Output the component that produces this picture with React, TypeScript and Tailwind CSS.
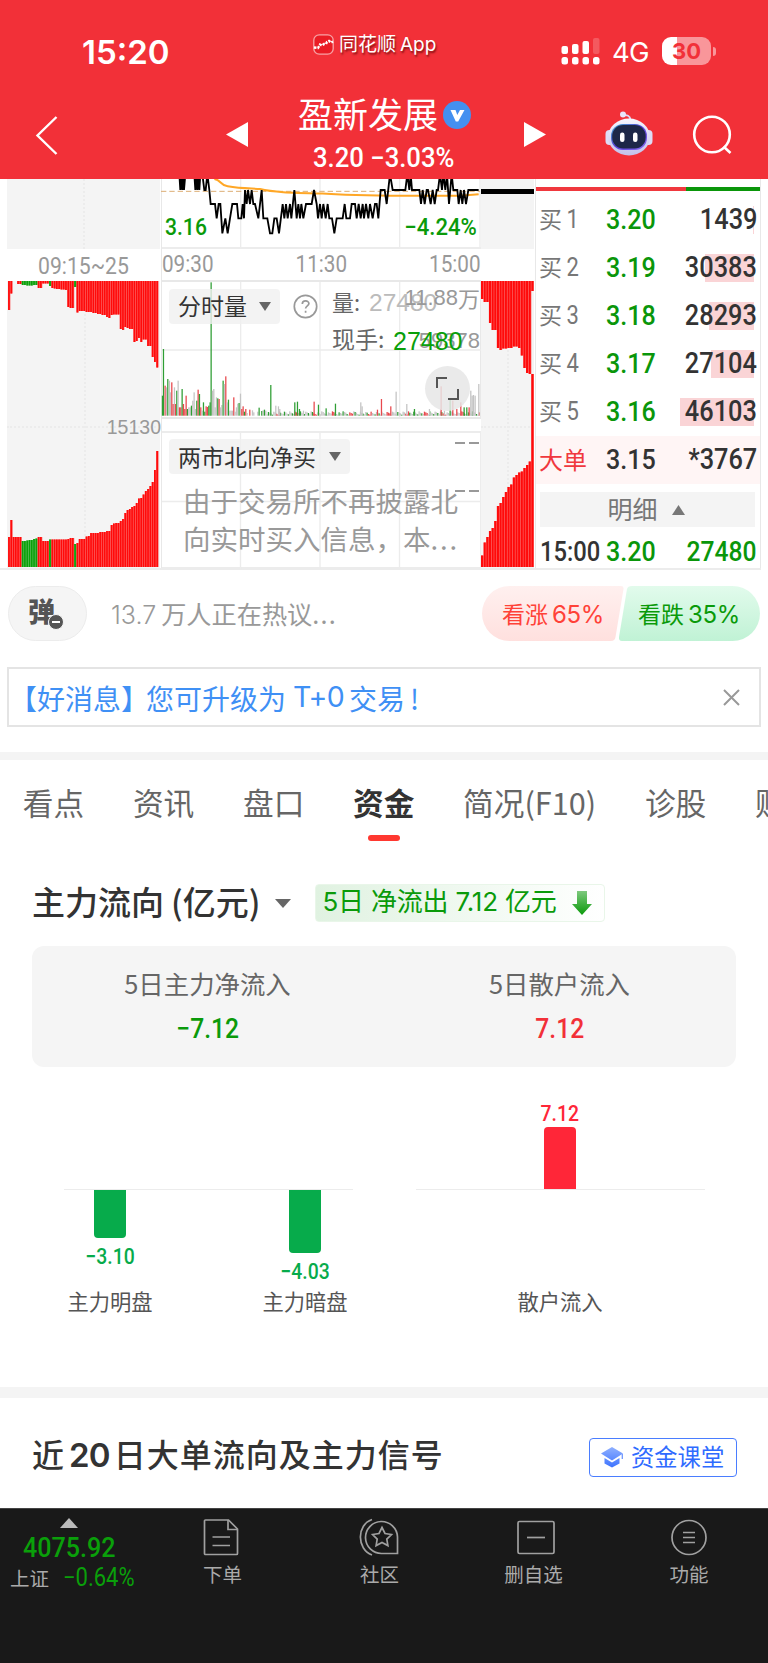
import React from 'react';
import clsx from 'clsx';

// condensed figures used for every price and volume
const NUM = "inline-block whitespace-nowrap font-['Roboto','Noto_Sans_CJK_SC',sans-serif] scale-x-88";

type Tone = 'g' | 'r' | 'n';

const TONES: Record<Tone, string> = { g: '#2f9e34', r: '#e8484d', n: '#c4c4c4' };

// call auction bars, [upper height, lower height, green?]
const AUCTION_OPEN: [number, number, boolean?][] = [
  [29, 30], [12.5, 47], [0, 30], [0, 30], [3, 30], [3, 30],
  [4, 26, true], [4, 26, true], [4.5, 26.5, true], [4.5, 27, true], [4.5, 27, true], [4, 28, true], [4, 28.5, true],
  [7, 30], [7, 30], [2.5, 26], [2.5, 26], [2.5, 26], [5, 27.5, true],
  [7, 27.5], [7.5, 27.5], [8, 27.5], [8, 27.5], [8.5, 27.5], [8.5, 27.5], [9, 27.5],
  [26, 28], [27, 29], [27, 29], [6, 23, true], [31.5, 24], [30, 28], [30, 28], [30, 28],
  [31, 30.5], [31, 31], [31, 34], [32, 34], [32, 34], [33, 34], [33, 35], [34, 35], [34, 35],
  [36, 36], [37, 36], [34, 42], [33.5, 43.5], [33.5, 44], [33.5, 44], [48, 46], [49, 48],
  [46, 54], [47, 57], [48, 58], [48, 60], [61, 61], [60, 64], [57, 68.5], [61, 69],
  [58.5, 72.5], [58.5, 76], [65, 78], [65, 81], [76, 85], [81, 97], [86.5, 116],
];

const AUCTION_CLOSE: [number, number, boolean?][] = [
  [18, 11.5], [21, 24.5], [21, 30], [42, 36], [49, 39], [49, 46], [67, 61], [69, 64], [67.5, 70], [67.5, 75],
  [67, 80], [67, 82.5], [65.5, 89.5], [65.5, 92], [67, 94.5], [74.5, 95.5], [87, 99], [92, 102], [93, 105.5], [10, 193],
];

const VOLUME: [number, number, Tone][] = [
  [4, 60, 'g'], [7, 200, 'g'], [12, 90, 'r'], [16, 85, 'n'], [20, 110, 'g'], [25, 105, 'n'], [28, 70, 'n'],
  [32, 100, 'r'], [36, 35, 'r'], [40, 85, 'n'], [43, 35, 'r'], [47, 75, 'g'], [51, 105, 'n'], [55, 25, 'r'],
  [59, 25, 'r'], [63, 80, 'g'], [67, 35, 'r'], [71, 20, 'r'], [75, 60, 'r'], [79, 20, 'g'], [83, 25, 'n'],
  [87, 25, 'n'], [91, 30, 'g'], [95, 45, 'n'], [99, 70, 'n'], [103, 20, 'n'], [107, 45, 'g'], [111, 78, 'r'],
  [115, 65, 'g'], [119, 25, 'r'], [123, 15, 'n'], [127, 40, 'g'], [131, 12, 'g'], [135, 28, 'r'], [139, 26, 'r'],
  [143, 30, 'g'], [147, 40, 'g'], [150, 400, 'g'], [154, 75, 'n'], [158, 80, 'n'], [162, 25, 'n'], [166, 55, 'n'],
  [170, 52, 'g'], [174, 50, 'r'], [178, 25, 'n'], [182, 32, 'n'], [186, 105, 'g'], [190, 95, 'n'], [194, 118, 'r'],
  [198, 40, 'n'], [202, 48, 'g'], [206, 15, 'n'], [210, 15, 'n'], [214, 15, 'n'], [218, 55, 'r'], [222, 12, 'n'],
  [226, 25, 'n'], [230, 36, 'n'], [234, 38, 'g'], [238, 66, 'n'], [242, 20, 'r'], [246, 28, 'r'], [250, 12, 'g'],
  [254, 20, 'r'], [258, 8, 'n'], [266, 18, 'r'], [274, 16, 'n'], [278, 10, 'n'], [290, 12, 'n'], [294, 24, 'g'],
  [302, 14, 'g'], [306, 16, 'n'], [310, 18, 'g'], [314, 15, 'n'], [329, 92, 'g'], [344, 30, 'n'],
  [352, 28, 'n'], [356, 20, 'n'], [401, 40, 'g'], [409, 42, 'g'], [415, 20, 'g'], [427, 15, 'n'], [459, 42, 'r'],
  [472, 33, 'g'], [495, 22, 'g'], [523, 36, 'g'], [599, 40, 'n'], [603, 28, 'n'], [649, 18, 'r'], [661, 50, 'r'],
  [689, 28, 'r'], [705, 72, 'n'], [737, 35, 'n'], [760, 20, 'g'], [805, 20, 'n'], [840, 88, 'r'], [850, 15, 'n'],
  [867, 50, 'g'], [875, 45, 'r'], [887, 20, 'r'], [899, 40, 'r'], [909, 25, 'g'], [917, 25, 'g'], [924, 25, 'r'],
  [929, 75, 'n'], [933, 60, 'n'], [937, 62, 'n'], [942, 60, 'n'], [953, 95, 'n'],
];

const PRICE_LINE =
  '55,-15 58,33 61,-15 64,33 67,-15 69,33 73,-15 100,-15 103,33 106,-15 109,33 112,-15 115,33 118,-15 124,-15 130,33 134,33 139,-15 145,33 149,75 162,75 167,118 173,75 178,75 184,163 193,118 200,163 207,118 214,75 228,75 232,118 241,118 245,75 249,118 252,33 257,75 261,33 267,75 272,33 277,75 282,75 292,118 302,33 ' +
  '307,118 319,118 327,163 334,163 340,118 347,118 354,163 365,75 370,118 375,75 380,118 387,75 391,118 400,33 407,118 412,75 417,118 421,75 427,118 435,75 452,75 459,33 467,75 471,118 477,75 482,118 487,75 494,118 500,75 505,118 513,118 520,163 527,118 545,118 551,75 556,118 567,118 572,75 582,75 587,118 593,75 599,118 605,75 609,118 615,75 622,118 627,75 635,118 642,75 647,75 652,118 659,33 671,33 677,75 687,-15 695,33 733,33 739,-15 745,33 749,-15 753,33 775,33 780,75 785,33 791,75 797,33 801,33 809,75 815,33 821,75 827,33 831,33 837,-15 843,33 847,-15 853,33 858,-15 864,75 872,-15 877,33 889,33 893,75 899,33 904,75 909,33 915,75 922,33 953,33';

const BIDS = [
  { label: '1', price: '3.20', volume: '1439', bar: 1 },
  { label: '2', price: '3.19', volume: '30383', bar: 49 },
  { label: '3', price: '3.18', volume: '28293', bar: 45 },
  { label: '4', price: '3.17', volume: '27104', bar: 43 },
  { label: '5', price: '3.16', volume: '46103', bar: 74 },
];

function Triangle({ className, points, w, h }: { className?: string; points: string; w: number; h: number }) {
  return (
    <svg className={clsx('shrink-0', className)} width={w} height={h} viewBox={`0 0 ${w} ${h}`} fill="currentColor">
      <polygon points={points} />
    </svg>
  );
}

function Header() {
  return (
    <header className="h-[179px] shrink-0 bg-[#f23038] text-white">
      <div className="flex h-[96px] items-start">
        <div className="ml-[82px] mt-[35px] w-[231px] font-['Inter'] text-[33px] font-semibold leading-[34px]">15:20</div>
        <div className="mt-[31px] flex w-[248px] items-center">
          <svg width="21" height="21" viewBox="0 0 21 21" fill="none">
            <rect x="0.8" y="0.8" width="19.4" height="19.4" rx="5.5" fill="#ea1c25" stroke="#f7a3a6" strokeWidth="1.3" />
            <path d="M1 13.5l4 .5 2-3.5 2 1 2-1.5 2 0 1-2 2-1 2 1.500 2-1" stroke="#fff" strokeWidth="2.400" strokeDasharray="2.500 1.2" />
          </svg>
          <span className="ml-[5px] font-['Noto_Sans_CJK_SC'] text-[19px] leading-[24px] [text-shadow:1px_2px_2px_rgba(80,0,0,0.7)]">
            同花顺<span className="ml-[4px] font-['Inter'] text-[19px]">App</span>
          </span>
        </div>
        <svg className="mt-[37px]" width="40" height="29" viewBox="0 0 40 29" fill="#fff">
          <rect x="0.500" y="9" width="6.500" height="8" rx="2" />
          <rect x="11" y="7" width="6.500" height="10" rx="2" />
          <rect x="21.500" y="4" width="6.500" height="13" rx="2" />
          <rect x="32" y="1" width="6.500" height="16" rx="2" opacity="0.2" />
          <rect x="0.500" y="20" width="6.500" height="7.500" rx="2.500" />
          <rect x="11" y="20" width="6.500" height="7.500" rx="2.500" />
          <rect x="21.500" y="20" width="6.500" height="7.500" rx="2.500" />
          <rect x="32" y="20" width="6.500" height="7.500" rx="2.500" />
        </svg>
        <div className="ml-[11px] mt-[38px] w-[50px] font-['Inter'] text-[27.500px] leading-[28px] tracking-tight">4G</div>
        <div className="mt-[37px] flex items-center">
          <div className="flex h-[28px] w-[49px] items-center justify-center rounded-[9px] bg-[linear-gradient(to_right,#fff_31%,#f9969a_31%)] font-['Inter'] text-[22px] font-bold leading-none text-[#f23038]">
            30
          </div>
          <div className="ml-[2px] h-[9px] w-[3px] rounded-r-full bg-[#f9969a]" />
        </div>
      </div>

      <div className="flex h-[83px] items-start">
        <svg className="ml-[35px] mt-[19px]" width="24" height="42" viewBox="0 0 24 42" fill="none" stroke="#fff" strokeWidth="2.4">
          <path d="M21.500 2L2.500 20.500l19 18.500" />
        </svg>
        <Triangle className="ml-[167px] mt-[26px]" w={22} h={25} points="0,12.500 22,0 22,25" />
        <div className="ml-[50px] w-[173px]">
          <div className="flex h-[37px] items-center">
            <span className="whitespace-nowrap pb-[3px] font-['Noto_Sans_CJK_SC'] text-[35px] leading-[34px]">盈新发展</span>
            <svg className="ml-[5px]" width="28" height="28" viewBox="0 0 28 28">
              <circle cx="14" cy="14" r="14" fill="#4490f0" />
              <path d="M7.500 9h5l1.800 5L17 9h4.500l-6.300 11.500h-2.400z" fill="#fff" />
            </svg>
          </div>
          <div className="mt-[9px] pl-[15px]">
            <span className="inline-block origin-left scale-x-95 whitespace-nowrap font-['Roboto'] text-[27px] font-medium leading-[32px]">3.20 −3.03%</span>
          </div>
        </div>
        <Triangle className="ml-[53px] mt-[26px]" w={22} h={25} points="0,0 22,12.500 0,25" />
        <svg className="ml-[59px] mt-[15px]" width="48" height="45" viewBox="0 0 48 45" fill="none">
          <defs>
            <linearGradient id="shell" x1="0" y1="0" x2="0" y2="1">
              <stop offset="0" stopColor="#f6f6ff" />
              <stop offset="1" stopColor="#c3c0ea" />
            </linearGradient>
            <linearGradient id="visor" x1="0" y1="0" x2="1" y2="1">
              <stop offset="0" stopColor="#3fa9c9" />
              <stop offset="0.5" stopColor="#5a42d8" />
              <stop offset="1" stopColor="#8a6cf0" />
            </linearGradient>
          </defs>
          <path d="M18 4.500c4-1 7 .5 7.500 4" stroke="#ddd8f5" strokeWidth="1.800" />
          <circle cx="18" cy="3.500" r="3" fill="#e9e4fa" />
          <rect x="0.500" y="19" width="9" height="15" rx="4" fill="#dedcf6" />
          <rect x="38.500" y="19" width="9" height="15" rx="4" fill="#dedcf6" />
          <ellipse cx="24" cy="26" rx="21" ry="18.500" fill="url(#shell)" />
          <rect x="6" y="13" width="36" height="26" rx="12" fill="url(#visor)" />
          <rect x="7.200" y="14" width="33.500" height="23.500" rx="11" fill="#1d2748" />
          <rect x="15" y="21.500" width="4.500" height="9.500" rx="2.200" fill="#fff" />
          <rect x="28" y="21.500" width="4.500" height="9.500" rx="2.200" fill="#fff" />
        </svg>
        <svg className="ml-[39px] mt-[18px]" width="42" height="42" viewBox="0 0 42 42" fill="none" stroke="#fff" strokeWidth="2.600">
          <circle cx="20" cy="20.500" r="17.800" />
          <path d="M31.500 32.500l7 6.500" />
        </svg>
      </div>
    </header>
  );
}

function AuctionChart({ bars, width, pitch, offset }: { bars: [number, number, boolean?][]; width: number; pitch: number; offset: number }) {
  return (
    <svg width={width} height="286" viewBox={`0 0 ${width} 286`}>
      {bars.map(([up, down, green], i) => {
        const x = offset + i * pitch;
        const fill = green ? '#0aa00a' : '#ff0a0a';
        return (
          <g key={i} fill={fill}>
            <rect x={x} y="0" width={pitch} height={up} opacity="0.6" />
            <rect x={x} y="0" width={pitch - 0.600} height={up} />
            <rect x={x} y={286 - down} width={pitch} height={down} opacity="0.6" />
            <rect x={x} y={286 - down} width={pitch - 0.600} height={down} />
          </g>
        );
      })}
    </svg>
  );
}

function VolumeChart() {
  // low trading between the peaks
  const rest = Array.from({ length: 160 }, (_, i) => {
    const seed = (i * 7919 + 131) % 97;
    const tone: Tone = seed % 5 === 0 ? 'r' : seed % 4 === 0 ? 'g' : 'n';
    return [318 + i * 4, 3 + (seed % 11), tone] as [number, number, Tone];
  });
  return (
    <svg className="absolute -left-px top-0" width="320" height="135" viewBox="0 0 960 405">
      <path d="M0 204H960M239 0V405M477 0V405M716 0V405" stroke="#ececec" strokeWidth="4" />
      {[...rest, ...VOLUME].map(([x, h, tone], i) => (
        <rect key={i} x={x - 1.500} y={401 - h} width="3.800" height={h} fill={TONES[tone]} />
      ))}
    </svg>
  );
}

function QuoteChart() {
  return (
    <div className="flex w-[535px] shrink-0">
      <div className="ml-[7px] w-[154px]">
        <div className="flex h-[70px] w-[153px] justify-center bg-[#f4f4f4]">
          <div className="w-0 border-l-2 border-dotted border-[#ececec]" />
        </div>
        <div className="h-[32px] pl-[31px] text-[23.500px] leading-[32px] text-[#999]">
          <span className="inline-block origin-left scale-x-90 font-['Roboto']">09:15~25</span>
        </div>
        <div className="relative h-[287px] w-[153px] bg-[#f4f4f4]">
          <div className="absolute left-[77px] top-0 h-full border-l-2 border-dotted border-[#ececec]" />
          <div className="absolute left-0 top-[145px] w-full border-t-2 border-dotted border-[#ececec]" />
          <div className="relative">
            <AuctionChart bars={AUCTION_OPEN} width={153} pitch={2.28} offset={1.1} />
          </div>
          <div className="absolute -right-px top-[136px] font-['Liberation_Sans'] text-[19.500px] leading-[20px] text-[#999]">15130</div>
        </div>
      </div>

      <div className="w-[320px] border-l border-[#e8e8e8]">
        <div className="relative h-[70px] border-b-2 border-[#ececec]">
          <svg className="absolute -left-px top-0" width="320" height="69" viewBox="0 0 960 207" fill="none">
            <path d="M239 0V207M477 0V207M716 0V207M957 0V207" stroke="#ececec" strokeWidth="4" />
            <path d="M0 37H957" stroke="#dcae74" strokeWidth="3" strokeDasharray="16 9" />
            <path d="M160 0c20 2 18 20 40 22c40 7 70 6 97 8c40 10 90 11 200 14c150 9 250 6 400 6l56-4" stroke="#ffa726" strokeWidth="6" />
            <polyline points={PRICE_LINE} stroke="#000" strokeWidth="5.500" />
          </svg>
          <div className="relative flex justify-between pl-[3px] pr-[4px] pt-[33px] text-[24px] font-medium leading-[30px] text-[#0a9a0a]">
            <span className={clsx(NUM, 'origin-left')}>3.16</span>
            <span className="inline-block origin-right scale-x-92 whitespace-nowrap font-['Roboto']">−4.24%</span>
          </div>
        </div>
        <div className="flex h-[31px] justify-between text-[23.500px] leading-[31px] text-[#999]">
          <span className={clsx(NUM, 'origin-left')}>09:30</span>
          <span className={NUM}>11:30</span>
          <span className={clsx(NUM, 'origin-right')}>15:00</span>
        </div>
        <div className="relative h-[139px] border-y-2 border-r border-[#e8e8e8]">
          <VolumeChart />
          <div className="absolute left-[7px] top-[7px] flex h-[35px] w-[111px] items-center rounded-[4px] bg-[#f0f0f0]/80 pl-[9px] font-['Noto_Sans_CJK_SC'] text-[23px] leading-[33px] text-[#333]">
            <span className="pb-[2px]">分时量</span>
            <Triangle className="ml-[12px] text-[#666]" w={12} h={9} points="0,0 12,0 6,9" />
          </div>
          <svg className="absolute left-[131px] top-[12px]" width="25" height="25" viewBox="0 0 25 25" fill="none" stroke="#999" strokeWidth="1.700">
            <circle cx="12.500" cy="12.500" r="11.200" />
            <path d="M9.300 10c0-4 6.600-4 6.600-.4c0 2.300-3.300 2.400-3.300 5M12.600 16.800v2" />
          </svg>
          <div className="absolute left-[170px] top-[6px] font-['Noto_Sans_CJK_SC'] text-[22px] leading-[27px] text-[#666]">量:</div>
          <div className="absolute left-[207px] top-[7px] font-['Liberation_Sans'] text-[24.500px] leading-[28px] text-[#bbb]">27480</div>
          <div className="absolute right-0 -top-px flex items-center text-[#999]">
            <span className="font-['Liberation_Sans'] text-[22px]">11.88</span>
            <span className="font-['Noto_Sans_CJK_SC'] text-[22px]">万</span>
          </div>
          <div className="absolute left-[170px] top-[43px] font-['Noto_Sans_CJK_SC'] text-[23px] leading-[27px] text-[#666]">现手:</div>
          <div className="absolute right-0 top-[45px] font-['Liberation_Sans'] text-[22px] leading-[28px] text-[#999]">59378</div>
          <div className="absolute left-[231px] top-[45px] font-['Liberation_Sans'] text-[25px] leading-[28px] text-[#0a9f0a]">27480</div>
          <div className="absolute left-[263px] top-[84px] flex h-[45px] w-[45px] items-center justify-center rounded-full bg-[#e6e6e6]/85">
            <svg width="23" height="23" viewBox="0 0 23 23" fill="none" stroke="#555" strokeWidth="2">
              <path d="M1 11V1h10M12 22h10V12" />
            </svg>
          </div>
        </div>
        <div className="relative mt-[12px] h-[138px] border-y-2 border-r border-[#ececec]">
          <svg className="absolute left-0 top-0" width="320" height="136" viewBox="0 0 320 136">
            <path d="M0 68.500H320M78.500 0V136M158 0V136M237.500 0V136" stroke="#ececec" strokeWidth="1.300" />
            <path d="M293 10h10M307 10h10M293 58h10M307 58h10" stroke="#999" strokeWidth="2" />
          </svg>
          <div className="relative ml-[7px] mt-[6px] flex h-[35px] w-[181px] items-center rounded-[4px] bg-[#f0f0f0]/80 pl-[9px] font-['Noto_Sans_CJK_SC'] text-[23px] leading-[33px] text-[#333]">
            <span className="pb-px">两市北向净买</span>
            <Triangle className="ml-[13px] text-[#666]" w={12} h={9} points="0,0 12,0 6,9" />
          </div>
          <div className="relative ml-[21px] mt-[7px] whitespace-nowrap font-['Noto_Sans_CJK_SC'] text-[27.500px] leading-[38px] text-[#999]">
            <p>由于交易所不再披露北</p>
            <p>向实时买入信息，本<span className="tracking-[1.800px]">...</span></p>
          </div>
        </div>
      </div>

      <div className="w-[54px]">
        <div className="h-[70px] w-[53px] bg-[#f4f4f4] pt-[10px]">
          <div className="h-[5px] bg-black" />
        </div>
        <div className="h-[32px]" />
        <div className="relative h-[287px] w-[53px] bg-[#f4f4f4]">
          <div className="absolute left-[26px] top-0 h-full border-l-2 border-dotted border-[#ececec]" />
          <div className="absolute left-0 top-[145px] w-full border-t-2 border-dotted border-[#ececec]" />
          <div className="relative">
            <AuctionChart bars={AUCTION_CLOSE} width={53} pitch={2.65} offset={0} />
          </div>
        </div>
      </div>
    </div>
  );
}

function OrderBook() {
  return (
    <div className="w-[226px] border-x border-[#e8e8e8]">
      <div className="mt-[8px] flex h-[4px]">
        <div className="w-[150px] bg-[#f0383e]" />
        <div className="grow bg-[#0a960a]" />
      </div>
      <div className="mt-[5px]">
        {BIDS.map((bid) => (
          <div key={bid.label} className="relative flex h-[48px] items-center pl-[3px] pr-[3px]">
            <span className="pb-[4px] font-['Noto_Sans_CJK_SC'] text-[23px] text-[#777]">买</span>
            <span className={clsx(NUM, 'w-[44px] origin-left pl-[5px] text-[25px] text-[#777]')}>{bid.label}</span>
            <span className={clsx(NUM, 'origin-left text-[28.500px] font-medium text-[#0a960a]')}>{bid.price}</span>
            <div className="absolute right-[6px] top-[10px] h-[28px] bg-[#fad4d6]" style={{ width: bid.bar }} />
            <span className={clsx(NUM, 'relative ml-auto origin-right text-[28.800px] font-medium text-[#333]')}>{bid.volume}</span>
          </div>
        ))}
      </div>
      <div className="flex h-[48px] items-center bg-[#fff5f5] pl-[3px] pr-[3px]">
        <span className="w-[67px] pb-[2px] font-['Noto_Sans_CJK_SC'] text-[24px] text-[#f0383e]">大单</span>
        <span className={clsx(NUM, 'origin-left text-[28.500px] font-medium text-[#333]')}>3.15</span>
        <span className={clsx(NUM, 'ml-auto origin-right text-[28.800px] font-medium text-[#333]')}>*3767</span>
      </div>
      <div className="ml-[4px] mr-[5px] mt-[8px] flex h-[35px] items-center justify-center bg-[#f4f4f4] font-['Noto_Sans_CJK_SC'] text-[25px] leading-[35px] text-[#777]">
        <span className="pb-[3px]">明细</span>
        <Triangle className="ml-[14px] mr-[3px] text-[#777]" w={13} h={10} points="0,10 13,10 6.500,0" />
      </div>
      <div className="flex h-[50px] items-center pl-[4px] pr-[3px] font-medium">
        <span className="w-[66px]">
          <span className={clsx(NUM, 'origin-left text-[27px] text-[#333]')}>15:00</span>
        </span>
        <span className={clsx(NUM, 'origin-left text-[28.500px] text-[#0a960a]')}>3.20</span>
        <span className={clsx(NUM, 'ml-auto origin-right text-[28px] text-[#0a960a]')}>27480</span>
      </div>
    </div>
  );
}

function Discussion() {
  return (
    <div className="flex h-[97px] items-start pt-[16px] font-['Noto_Sans_CJK_SC']">
      <div className="relative ml-[8px] flex h-[55px] w-[79px] items-center rounded-full border border-[#ececec] bg-[#f5f5f5] pl-[19px]">
        <span className="pb-[7px] text-[27px] font-black leading-none text-[#555]">弹</span>
        <svg className="absolute left-[39px] top-[27px]" width="16" height="16" viewBox="0 0 16 16">
          <circle cx="8" cy="8" r="7.500" fill="#555" stroke="#f5f5f5" />
          <path d="M4 8h8" stroke="#fff" strokeWidth="2" />
        </svg>
      </div>
      <div className="ml-[24px] w-[371px] whitespace-nowrap text-[25.200px] leading-[54px] text-[#999]">
        <span className="font-['Inter'] text-[25px] font-light">13.7</span>
        <span className="ml-[5px]">万人正在热议<span className="tracking-[1.300px]">...</span></span>
      </div>
      <div className="relative flex h-[55px] w-[278px] items-center text-[23px]">
        <svg className="absolute left-0 top-0" width="278" height="55" viewBox="0 0 278 55">
          <defs>
            <linearGradient id="up" x1="0" y1="0" x2="0" y2="1">
              <stop offset="0" stopColor="#fff0ef" />
              <stop offset="1" stopColor="#ffe0de" />
            </linearGradient>
            <linearGradient id="down" x1="0" y1="0" x2="0" y2="1">
              <stop offset="0" stopColor="#e2fbec" />
              <stop offset="1" stopColor="#c0f2d5" />
            </linearGradient>
          </defs>
          <path d="M27.500 0H139q3 0 2.500 3l-8 48q-.6 4-4.500 4H27.500a27.500 27.500 0 010-55z" fill="url(#up)" />
          <path d="M150 0H250.500a27.500 27.500 0 010 55H140q-3.500 0-3-4l8-48q.6-3 5-3z" fill="url(#down)" />
        </svg>
        <span className="relative pl-[20px] pt-px text-[#ff4238]">看涨<span className="ml-[4px] font-['Inter'] text-[24px] tracking-[-0.300px]">65%</span></span>
        <span className="relative ml-auto pr-[20px] pt-px text-[#0a9a0a]">看跌<span className="ml-[4px] font-['Inter'] text-[24px] tracking-[-0.300px]">35%</span></span>
      </div>
    </div>
  );
}

function Notice() {
  return (
    <div className="mx-[7px] flex h-[60px] w-[754px] shrink-0 items-center border-2 border-[#e4e4e4] font-['Noto_Sans_CJK_SC'] text-[28px] text-[#3f90f5]">
      <div className="flex items-center whitespace-nowrap pt-px">
        <span>【好消息】</span>
        <span className="ml-[-3px]">您可升级为</span>
        <span className="ml-[7px] mr-[5px] font-['Inter'] text-[28.500px] tracking-tight">T+0</span>
        <span>交易</span>
        <span className="ml-[5px]">!</span>
      </div>
      <svg className="ml-auto mr-[19px]" width="17" height="17" viewBox="0 0 17 17" stroke="#999" strokeWidth="2">
        <path d="M1 1l15 15M16 1L1 16" />
      </svg>
    </div>
  );
}

function Tabs() {
  const tabs = ['看点', '资讯', '盘口', '资金', '简况(F10)', '诊股', '财务'];
  return (
    <nav className="flex h-[104px] w-[768px] shrink-0 gap-[48.700px] overflow-hidden pl-[22.800px] pt-[20px] font-['Noto_Sans_CJK_SC'] text-[30.700px] text-[#666]">
      {tabs.map((tab) => (
        <div key={tab} className={clsx('flex shrink-0 flex-col items-center', tab === '资金' && 'font-bold text-[#333]')}>
          <span className="h-[55px] whitespace-nowrap leading-[44px]">{tab}</span>
          {tab === '资金' && <div className="h-[6px] w-[32px] rounded-full bg-[#ff3830]" />}
        </div>
      ))}
    </nav>
  );
}

function Bar({ value, name, height, up }: { value: string; name: string; height: number; up?: boolean }) {
  return (
    <div className="flex w-[92px] flex-col items-center">
      <div className="flex h-[90px] flex-col items-center justify-end">
        {up && (
          <>
            <span className={clsx(NUM, 'text-[22px] font-medium leading-[26px] text-[#ff2638]')}>{value}</span>
            <div className="w-[32px] rounded-t-[4px] bg-[#ff2638]" style={{ height }} />
          </>
        )}
      </div>
      <div className="flex h-[96px] flex-col items-center">
        {!up && (
          <>
            <div className="w-[32px] rounded-b-[4px] bg-[#07ab4b]" style={{ height }} />
            <span className={clsx(NUM, 'mt-[5px] text-[22px] font-medium leading-[28px] text-[#07ab4b]')}>{value}</span>
          </>
        )}
      </div>
      <span className="text-[21.300px] leading-[30px] text-[#555]">{name}</span>
    </div>
  );
}

function CapitalFlow() {
  return (
    <section className="h-[523px] shrink-0 px-[32px] pt-[20px] font-['Noto_Sans_CJK_SC']">
      <div className="flex h-[38px] items-center">
        <h2 className="whitespace-nowrap pb-[4px] text-[33px] font-medium leading-[38px] text-[#333]">
          主力流向<span className="ml-[7px]">(亿元)</span>
        </h2>
        <Triangle className="ml-[14px] text-[#666]" w={16} h={9} points="0,0 16,0 8,9" />
        <div className="ml-[24px] flex h-[38px] w-[290px] items-center rounded-[4px] border border-[#e9f6e9] bg-linear-to-r from-[#e0f2e1] to-white pl-[7px] text-[26px] leading-[36px] text-[#0a9a0a]">
          <span className="whitespace-nowrap pb-[2px] font-['Inter','Noto_Sans_CJK_SC'] tracking-[-0.200px]">5日 净流出 7.12 亿元</span>
          <svg className="ml-auto mr-[12px]" width="20" height="24" viewBox="0 0 20 24">
            <defs>
              <linearGradient id="arrow" x1="0" y1="0" x2="0" y2="1">
                <stop offset="0" stopColor="#7ec97e" />
                <stop offset="1" stopColor="#0a9a0a" />
              </linearGradient>
            </defs>
            <path d="M5 0h10v13h5L10 24L0 13h5z" fill="url(#arrow)" />
          </svg>
        </div>
      </div>

      <div className="mt-[24px] flex h-[121px] rounded-[12px] bg-[#f5f5f5]">
        <div className="flex w-[351px] flex-col items-center pt-[19px]">
          <span className="text-[25.400px] leading-[36px] text-[#666]">5日主力净流入</span>
          <span className={clsx(NUM, 'mt-[10px] text-[28px] font-medium leading-[36px] text-[#0a9a0a]')}>−7.12</span>
        </div>
        <div className="flex w-[353px] flex-col items-center pt-[19px]">
          <span className="text-[25.400px] leading-[36px] text-[#666]">5日散户流入</span>
          <span className={clsx(NUM, 'mt-[10px] text-[28px] font-medium leading-[36px] text-[#f23038]')}>7.12</span>
        </div>
      </div>

      <div className="mt-[33px] flex">
        <div className="relative flex w-[352px] pl-[32px]">
          <div className="absolute left-[32px] top-[89px] h-px w-[289px] bg-[#ececec]" />
          <div className="relative flex gap-[103px]">
            <Bar value="−3.10" name="主力明盘" height={48} />
            <Bar value="−4.03" name="主力暗盘" height={63} />
          </div>
        </div>
        <div className="relative flex w-[352px] justify-center">
          <div className="absolute left-[32px] top-[89px] h-px w-[289px] bg-[#ececec]" />
          <Bar value="7.12" name="散户流入" height={63} up />
        </div>
      </div>
    </section>
  );
}

function SignalTitle() {
  return (
    <section className="flex h-[110px] shrink-0 items-center justify-between pl-[32px] pr-[31px] font-['Noto_Sans_CJK_SC']">
      <h2 className="whitespace-nowrap pt-[3px] text-[32px] font-medium tracking-[1px] text-[#333]">
        近<span className="mx-[4px] font-['Inter'] text-[33px] font-semibold tracking-[-0.800px]">20</span>日大单流向及主力信号
      </h2>
      <button className="mt-[9px] flex h-[39px] w-[148px] items-center rounded-[4px] border-[1.500px] border-[#4a7dff] pl-[11px] text-[23.300px] leading-[34px] text-[#2f6bff]">
        <svg className="mr-[7px]" width="23" height="21" viewBox="0 0 23 21">
          <defs>
            <linearGradient id="cap" x1="0" y1="0" x2="0" y2="1">
              <stop offset="0" stopColor="#8fb0ff" />
              <stop offset="1" stopColor="#3d73ff" />
            </linearGradient>
          </defs>
          <path d="M11 0L22 6.500 11 13.500 0 6.500zM3.500 11l7.500 4.500 7.500-4.500v5.500L11 20.500l-7.500-4z" fill="url(#cap)" />
          <path d="M21.300 7v5" stroke="#6f97ff" strokeWidth="1.300" />
        </svg>
        <span className="pb-[3px]">资金课堂</span>
      </button>
    </section>
  );
}

function BottomNav() {
  return (
    <footer className="flex h-[155px] shrink-0 border-t border-[#444] bg-[#191919] font-['Noto_Sans_CJK_SC'] text-[19.500px] text-[#aaa]">
      <div className="w-[149px] shrink-0">
        <Triangle className="ml-[60px] mt-[9px] text-[#bbb]" w={18} h={10} points="0,10 18,10 9,0" />
        <div className="flex h-[35px] items-center pl-[23px] pt-[5px] text-[28.500px] font-medium leading-[32px] text-[#0a9f0a]">
          <span className={clsx(NUM, 'origin-left')}>4075.92</span>
        </div>
        <div className="flex items-center pl-[10px] leading-[29px]">
          上证
          <span className={clsx(NUM, 'ml-[14px] origin-left text-[25px] text-[#0a9f0a]')}>−0.64%</span>
        </div>
      </div>
      <NavItem className="w-[147px]" label="下单">
        <path d="M1.500 2h23l9 9v24.500q0 1-1 1h-31q-1 0-1-1V3q0-1 1-1z" />
        <path d="M24 2v9.500h9.500M8.500 19H26M8.500 27.500H26" />
      </NavItem>
      <NavItem className="w-[167px]" label="社区">
        <path d="M11 1.500C-4.500 7-4.500 31 11 37" />
        <path d="M36.500 35.500H21a16 16 0 1115.500-16.500z" />
        <path d="M21 9.500l3 6 6.500 1-4.700 4.600 1.100 6.500-5.900-3.100-5.900 3.100 1.100-6.500-4.600-4.600 6.400-1z" />
      </NavItem>
      <NavItem className="w-[141px]" label="删自选">
        <rect x="3" y="3.500" width="36" height="32" rx="1.500" />
        <path d="M12 19.500h18" />
      </NavItem>
      <NavItem className="w-[170px]" label="功能">
        <circle cx="19" cy="19.500" r="17" />
        <path d="M13 14.500h12M13 19.500h12M13 24.500h12" />
      </NavItem>
    </footer>
  );
}

function NavItem({ className, label, children }: { className: string; label: string; children: React.ReactNode }) {
  return (
    <div className={clsx('flex shrink-0 flex-col items-center pt-[9px]', className)}>
      <svg width="38" height="38" viewBox="0 0 38 38" fill="none" stroke="#a0a0a0" strokeWidth="1.700" overflow="visible">
        {children}
      </svg>
      <span className="mt-[4px] leading-[28px]">{label}</span>
    </div>
  );
}

export default function App() {
  return (
    <div className="flex h-[1663px] w-[768px] flex-col overflow-hidden bg-white">
      <Header />
      <div className="flex h-[391px] w-[761px] shrink-0 border-b-2 border-[#ececec]">
        <QuoteChart />
        <OrderBook />
      </div>
      <Discussion />
      <Notice />
      <div className="mt-[25px] h-[8px] shrink-0 bg-[#f4f4f4]" />
      <Tabs />
      <CapitalFlow />
      <div className="h-[11px] shrink-0 bg-[#f4f4f4]" />
      <SignalTitle />
      <BottomNav />
    </div>
  );
}
